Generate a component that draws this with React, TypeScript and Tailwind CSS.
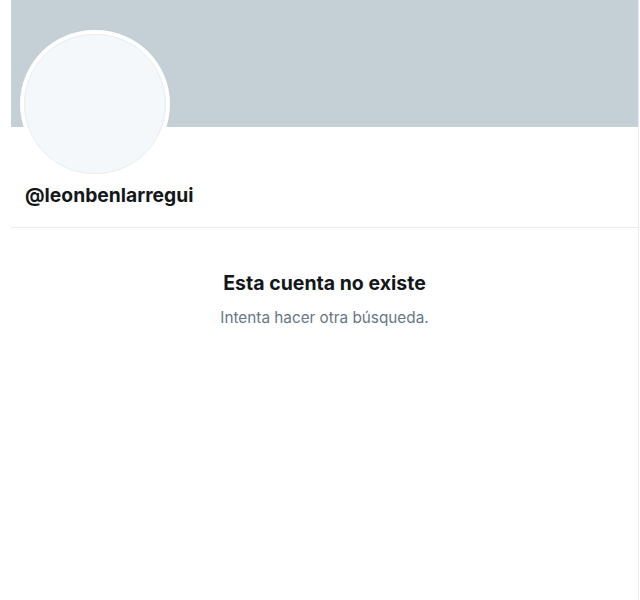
export default function App() {
  return (
    <div
      className="min-h-[600px] w-[640px] bg-white pl-[11px] flex"
      style={{ fontFamily: 'Inter, "Liberation Sans", Arial, sans-serif' }}
    >
      <main className="w-[628px] min-h-[600px] border-r border-[#e6ecf0] flex flex-col">
        <div className="h-[127px] bg-[#c4cfd6]" />
        <div className="px-[9px]">
          <div className="-mt-[97px] w-[150px] h-[148px] rounded-full bg-white p-[4px]">
            <div className="w-full h-full rounded-full bg-[#f5f8fa] border border-[#e6ecf0]" />
          </div>
        </div>
        <div className="px-[14px] pt-[6px] pb-[21px] border-b border-[#e6ecf0]">
          <h2 className="text-[19.3px] leading-[22px] font-bold text-[#14171a]">
            @leonbenlarregui
          </h2>
        </div>
        <section className="flex flex-col items-center pt-[43px]">
          <h1 className="text-[19.5px] leading-[24px] font-bold text-[#14171a]">
            Esta cuenta no existe
          </h1>
          <p className="mt-[14px] text-[15.3px] leading-[18px] text-[#657786]">
            Intenta hacer otra búsqueda.
          </p>
        </section>
      </main>
    </div>
  );
}
